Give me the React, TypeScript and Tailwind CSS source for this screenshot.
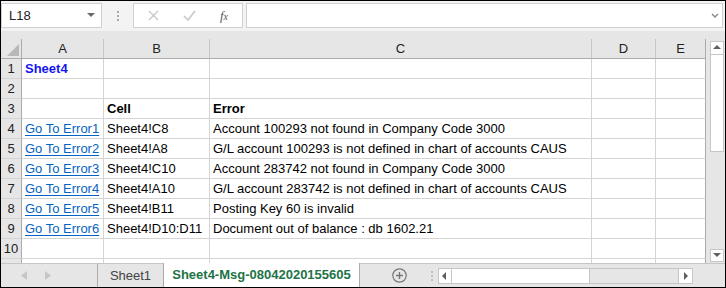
import React from "react";

const font = { fontFamily: '"Liberation Sans", Arial, sans-serif' };

type Cell = { text: string; kind?: "link" | "bold" | "title" };

const rows: (Cell | null)[][] = [
  [{ text: "Sheet4", kind: "title" }, null, null],
  [null, null, null],
  [null, { text: "Cell", kind: "bold" }, { text: "Error", kind: "bold" }],
  [{ text: "Go To Error1", kind: "link" }, { text: "Sheet4!C8" }, { text: "Account 100293 not found in Company Code 3000" }],
  [{ text: "Go To Error2", kind: "link" }, { text: "Sheet4!A8" }, { text: "G/L account 100293 is not defined in chart of accounts CAUS" }],
  [{ text: "Go To Error3", kind: "link" }, { text: "Sheet4!C10" }, { text: "Account 283742 not found in Company Code 3000" }],
  [{ text: "Go To Error4", kind: "link" }, { text: "Sheet4!A10" }, { text: "G/L account 283742 is not defined in chart of accounts CAUS" }],
  [{ text: "Go To Error5", kind: "link" }, { text: "Sheet4!B11" }, { text: "Posting Key 60 is invalid" }],
  [{ text: "Go To Error6", kind: "link" }, { text: "Sheet4!D10:D11" }, { text: "Document out of balance : db 1602.21" }],
  [null, null, null],
  [null, null, null],
];

function CellText({ c }: { c: Cell | null }) {
  if (!c) return null;
  if (c.kind === "link")
    return <span className="text-[#0563c1] underline underline-offset-2 decoration-[#0563c1]">{c.text}</span>;
  if (c.kind === "title") return <span className="font-bold text-[#1515f0]">{c.text}</span>;
  if (c.kind === "bold") return <span className="font-bold text-black">{c.text}</span>;
  return <span className="text-black">{c.text}</span>;
}

function Tri({ dir }: { dir: "up" | "down" | "left" | "right" }) {
  const pts = {
    up: "1,6 5,2 9,6",
    down: "1,2 5,6 9,2",
    left: "6,1 2,5 6,9",
    right: "3,1 7,5 3,9",
  }[dir];
  return (
    <svg width="10" height="10" viewBox="0 0 10 10">
      <polygon points={pts} fill="#606060" />
    </svg>
  );
}

export default function App() {
  return (
    <div className="w-[726px] h-[288px] border border-black bg-[#e6e6e6] flex flex-col overflow-hidden text-[13px]" style={font}>
      {/* Formula bar */}
      <div className="h-[30px] bg-[#f3f3f3] flex items-start pt-[2px] shrink-0">
        <div className="w-[101px] h-[25px] bg-white border border-[#d0d0d0] flex items-center justify-between pl-[7px] pr-[6px]">
          <span className="text-[#222]">L18</span>
          <svg width="8" height="5" viewBox="0 0 8 5"><polygon points="0,0 8,0 4,4" fill="#6a6a6a" /></svg>
        </div>
        <div className="w-[31px] h-[25px] flex flex-col items-center justify-center gap-[2px]">
          <div className="w-[2px] h-[2px] bg-[#a8a8a8]" />
          <div className="w-[2px] h-[2px] bg-[#a8a8a8]" />
          <div className="w-[2px] h-[2px] bg-[#a8a8a8]" />
        </div>
        <div className="w-[110px] h-[25px] bg-white border border-[#d0d0d0] flex items-center">
          <div className="w-[38px] flex justify-center">
            <svg width="11" height="11" viewBox="0 0 11 11"><path d="M1 1 L10 10 M10 1 L1 10" stroke="#c8c8c8" strokeWidth="1.4" /></svg>
          </div>
          <div className="w-[34px] flex justify-center">
            <svg width="13" height="11" viewBox="0 0 13 11"><path d="M1 6 L5 10 L12 1" stroke="#c8c8c8" strokeWidth="1.6" fill="none" /></svg>
          </div>
          <div className="w-[36px] flex justify-center">
            <span className="italic text-[#555] text-[13px]" style={{ fontFamily: '"Liberation Serif", serif' }}>
              f<span className="text-[10px]">x</span>
            </span>
          </div>
        </div>
        <div className="ml-[3px] w-[477px] h-[25px] bg-white border border-[#d0d0d0] flex items-center justify-end pr-[3px]">
          <svg width="8" height="6" viewBox="0 0 8 6"><path d="M1 1 L4 4 L7 1" stroke="#8a8a8a" strokeWidth="1.5" fill="none" /></svg>
        </div>
      </div>
      <div className="h-[8px] shrink-0" />

      {/* Sheet body */}
      <div className="flex h-[224px] shrink-0">
        <div className="w-[706px] overflow-hidden">
          <div className="grid grid-cols-[21px_82px_106px_382px_64px_50px]">
            {/* header row */}
            <div className="h-[20px] bg-[#e6e6e6] border-r border-b border-[#ababab] relative">
              <svg className="absolute right-[2px] bottom-[2px]" width="12" height="12" viewBox="0 0 12 12">
                <polygon points="12,0 12,12 0,12" fill="#b8b8b8" />
              </svg>
            </div>
            {["A", "B", "C", "D", "E"].map((l, i) => (
              <div
                key={l}
                className={`h-[20px] bg-[#e6e6e6] border-b border-[#ababab] flex items-center justify-center text-[#222] ${i < 4 ? "border-r border-r-[#c6c6c6]" : "border-r border-r-[#ababab]"}`}
              >
                {l}
              </div>
            ))}
            {rows.map((r, ri) => (
              <React.Fragment key={ri}>
                <div className="h-[20px] bg-[#e6e6e6] border-r border-r-[#ababab] border-b border-b-[#d4d4d4] flex items-center justify-center text-[#222]">
                  {ri < 10 ? ri + 1 : ""}
                </div>
                {r.map((c, ci) => (
                  <div
                    key={ci}
                    className="h-[20px] bg-white border-r border-b border-[#d4d4d4] flex items-center pl-[3px] whitespace-nowrap overflow-visible"
                  >
                    <CellText c={c} />
                  </div>
                ))}
                <div className="h-[20px] bg-white border-r border-b border-[#d4d4d4]" />
                <div className="h-[20px] bg-white border-r border-r-[#ababab] border-b border-b-[#d4d4d4]" />
              </React.Fragment>
            ))}
          </div>
        </div>
        {/* vertical scrollbar */}
        <div className="ml-[3px] w-[14px] flex flex-col pt-[2px]">
          <div className="h-[14px] bg-white border border-[#c6c6c6] flex items-center justify-center">
            <Tri dir="up" />
          </div>
          <div className="h-[97px] bg-white border border-t-0 border-[#c6c6c6]" />
          <div className="flex-1" />
          <div className="h-[13px] mb-[1px] bg-white border border-[#c6c6c6] flex items-center justify-center">
            <Tri dir="down" />
          </div>
        </div>
      </div>

      {/* Tab bar */}
      <div className="flex-1 flex items-stretch border-t border-[#c6c6c6] text-[13px]">
        <div className="w-[96px] flex items-center pl-[20px] gap-[18px]">
          <svg width="6" height="9" viewBox="0 0 6 9"><polygon points="6,0 0,4.5 6,9" fill="#c6c6c6" /></svg>
          <svg width="6" height="9" viewBox="0 0 6 9"><polygon points="0,0 6,4.5 0,9" fill="#c6c6c6" /></svg>
        </div>
        <div className="w-[66px] border-l border-[#ababab] flex items-center justify-center text-[#444]">Sheet1</div>
        <div className="w-[197px] -mt-px bg-white border-l border-r border-[#ababab] flex items-center justify-center font-bold text-[#217346]">
          Sheet4-Msg-08042020155605
        </div>
        <div className="w-[78px] flex items-center pl-[32px]">
          <svg width="15" height="15" viewBox="0 0 15 15">
            <circle cx="7.5" cy="7.5" r="6.7" stroke="#777" strokeWidth="1.2" fill="none" />
            <path d="M7.5 4 V11 M4 7.5 H11" stroke="#777" strokeWidth="1.4" />
          </svg>
          <div className="ml-[24px] flex flex-col gap-[2px]">
            <div className="w-[2px] h-[2px] bg-[#c0c0c0]" />
            <div className="w-[2px] h-[2px] bg-[#c0c0c0]" />
            <div className="w-[2px] h-[2px] bg-[#c0c0c0]" />
          </div>
        </div>
        <div className="flex items-center">
          <div className="w-[255px] h-[16px] border border-[#c6c6c6] bg-[#e6e6e6] flex">
            <div className="w-[12px] bg-white flex items-center justify-center"><Tri dir="left" /></div>
            <div className="w-[139px] bg-white border-l border-r border-[#c6c6c6]" />
            <div className="flex-1" />
            <div className="w-[14px] bg-white border-l border-[#c6c6c6] flex items-center justify-center"><Tri dir="right" /></div>
          </div>
        </div>
      </div>
    </div>
  );
}
